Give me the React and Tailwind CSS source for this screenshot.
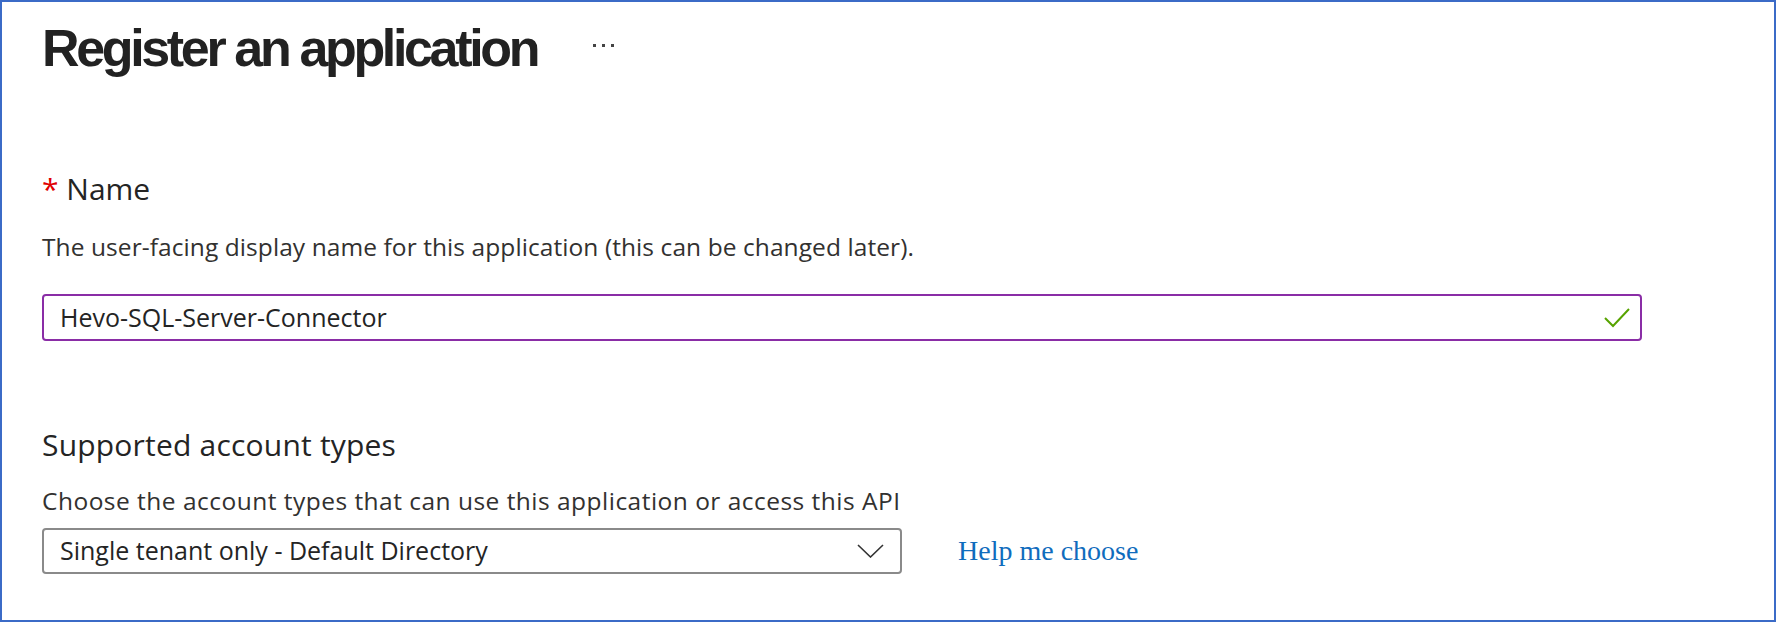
export default function App() {
  return (
    <div className="w-[1776px] h-[622px] border-2 border-[#3b6bc7] bg-white pl-[40px] pt-[20px] text-[#242424] overflow-hidden" style={{ fontFamily: '"Open Sans", "Noto Sans", sans-serif' }}>
      <div className="flex items-center h-[52px]">
        <h1 className="text-[52px] leading-[52px] font-bold tracking-[-3.35px] text-[#222]" style={{ fontFamily: '"Liberation Sans", Arial, sans-serif' }}>
          Register an application
        </h1>
        <div className="flex gap-[6px] ml-[56px] mt-[-6px]">
          <div className="w-[3px] h-[3px] bg-[#444]" />
          <div className="w-[3px] h-[3px] bg-[#444]" />
          <div className="w-[3px] h-[3px] bg-[#444]" />
        </div>
      </div>

      <div className="mt-[97px] text-[30px] leading-[36px]">
        <span className="text-[#e00000]">*</span> Name
      </div>
      <p className="mt-[25px] text-[24.5px] leading-[30px] tracking-[0.08px] text-[#323130]">
        The user-facing display name for this application (this can be changed later).
      </p>
      <div className="mt-[32px] w-[1600px] h-[47px] border-2 border-[#8a2da6] rounded-[4px] flex items-center justify-between pl-[16px] pr-[10px]">
        <span className="text-[25px] text-[#242424]">Hevo-SQL-Server-Connector</span>
        <svg width="26" height="20" viewBox="0 0 26 20" fill="none">
          <polyline points="1,10 9,18 25,1" stroke="#57a300" strokeWidth="2" />
        </svg>
      </div>

      <div className="mt-[86px] text-[30px] leading-[36px] tracking-[0.2px]">Supported account types</div>
      <p className="mt-[23px] text-[24.5px] leading-[30px] tracking-[0.48px] text-[#323130]">
        Choose the account types that can use this application or access this API
      </p>
      <div className="mt-[12px] flex items-center">
        <div className="w-[860px] h-[46px] border-2 border-[#8a8a8a] rounded-[4px] flex items-center justify-between pl-[16px] pr-[16px]">
          <span className="text-[25px] text-[#242424]">Single tenant only - Default Directory</span>
          <svg width="27" height="14" viewBox="0 0 27 14" fill="none">
            <polyline points="1,1 13.5,13 26,1" stroke="#333" strokeWidth="1.6" />
          </svg>
        </div>
        <a className="ml-[56px] text-[28px] text-[#0f6cbd]" style={{ fontFamily: '"Liberation Serif", "Times New Roman", serif' }}>
          Help me choose
        </a>
      </div>
    </div>
  );
}
